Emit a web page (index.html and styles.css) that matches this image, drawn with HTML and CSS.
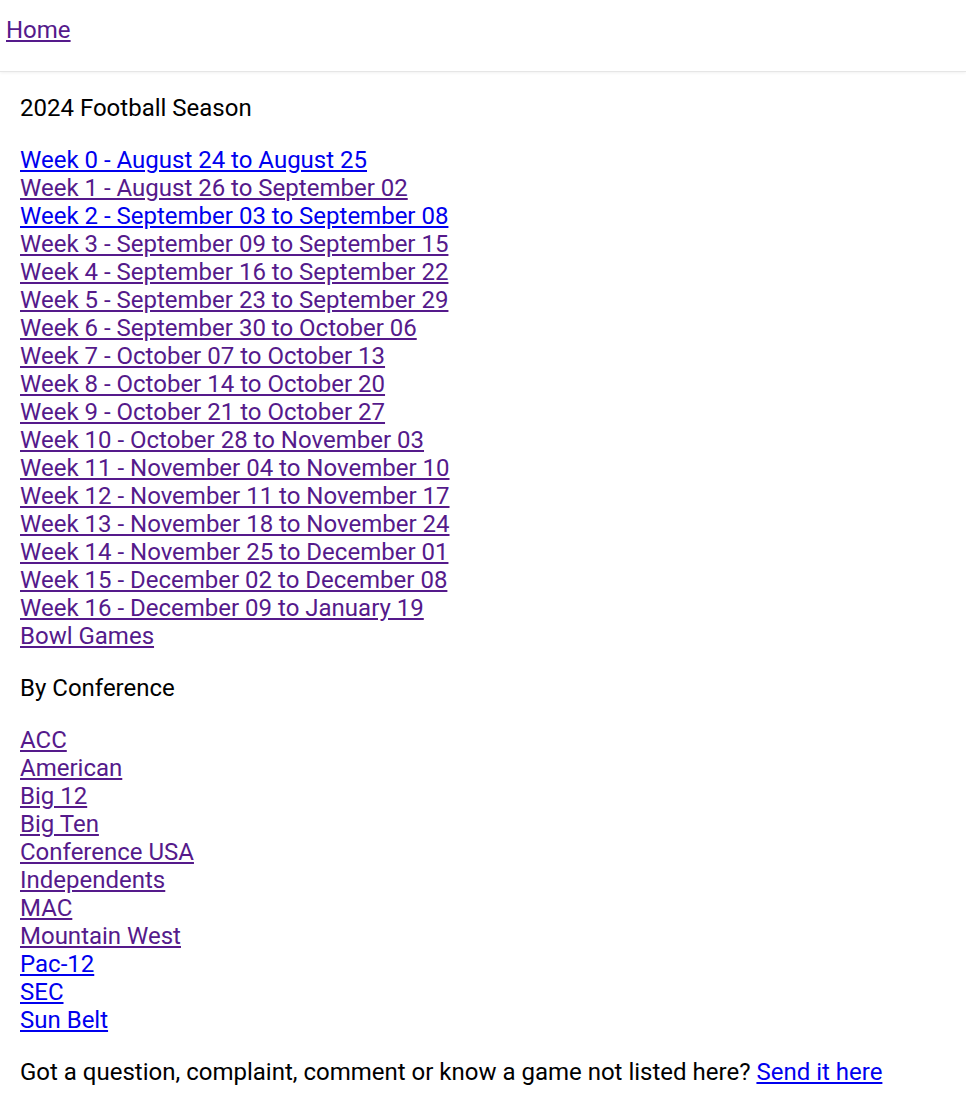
FILE: index.html
```html
<!DOCTYPE html>
<html lang="en">
<head>
<meta charset="utf-8">
<title>2024 Football Season</title>
<link rel="stylesheet" href="styles.css">
</head>
<body>
<header class="topbar">
  <a class="v" href="#home">Home</a>
</header>
<main class="content">
  <p class="heading first">2024 Football Season</p>
  <ul class="links">
    <li><a class="u" href="#w0">Week 0 - August 24 to August 25</a></li>
    <li><a class="v" href="#w1">Week 1 - August 26 to September 02</a></li>
    <li><a class="u" href="#w2">Week 2 - September 03 to September 08</a></li>
    <li><a class="v" href="#w3">Week 3 - September 09 to September 15</a></li>
    <li><a class="v" href="#w4">Week 4 - September 16 to September 22</a></li>
    <li><a class="v" href="#w5">Week 5 - September 23 to September 29</a></li>
    <li><a class="v" href="#w6">Week 6 - September 30 to October 06</a></li>
    <li><a class="v" href="#w7">Week 7 - October 07 to October 13</a></li>
    <li><a class="v" href="#w8">Week 8 - October 14 to October 20</a></li>
    <li><a class="v" href="#w9">Week 9 - October 21 to October 27</a></li>
    <li><a class="v" href="#w10">Week 10 - October 28 to November 03</a></li>
    <li><a class="v" href="#w11">Week 11 - November 04 to November 10</a></li>
    <li><a class="v" href="#w12">Week 12 - November 11 to November 17</a></li>
    <li><a class="v" href="#w13">Week 13 - November 18 to November 24</a></li>
    <li><a class="v" href="#w14">Week 14 - November 25 to December 01</a></li>
    <li><a class="v" href="#w15">Week 15 - December 02 to December 08</a></li>
    <li><a class="v" href="#w16">Week 16 - December 09 to January 19</a></li>
    <li><a class="v" href="#bowl">Bowl Games</a></li>
  </ul>
  <p class="heading">By Conference</p>
  <ul class="links">
    <li><a class="v" href="#acc">ACC</a></li>
    <li><a class="v" href="#american">American</a></li>
    <li><a class="v" href="#big12">Big 12</a></li>
    <li><a class="v" href="#bigten">Big Ten</a></li>
    <li><a class="v" href="#cusa">Conference USA</a></li>
    <li><a class="v" href="#ind">Independents</a></li>
    <li><a class="v" href="#mac">MAC</a></li>
    <li><a class="v" href="#mw">Mountain West</a></li>
    <li><a class="u" href="#pac12">Pac-12</a></li>
    <li><a class="u" href="#sec">SEC</a></li>
    <li><a class="u" href="#sunbelt">Sun Belt</a></li>
  </ul>
  <p class="heading">Got a question, complaint, comment or know a game not listed here? <a class="u" href="#contact">Send it here</a></p>
</main>
</body>
</html>
```
FILE: styles.css
```css
html, body {
  margin: 0;
  padding: 0;
  background: #ffffff;
}
body {
  font-family: Roboto, "Liberation Sans", Arial, sans-serif;
  font-size: 24px;
  line-height: 28px;
  color: #000000;
}
.topbar {
  height: 72px;
  box-sizing: border-box;
  padding: 16px 6px 0;
  border-bottom: 1px solid #e6e6e6;
  box-shadow: 0 1px 3px rgba(0, 0, 0, 0.06);
}
.content {
  padding: 0 20px;
}
.heading {
  margin: 24px 0;
}
.heading.first {
  margin-top: 22px;
}
.links {
  list-style: none;
  margin: 0;
  padding: 0;
}
a {
  text-decoration: underline;
}
a.u {
  color: #0000ee;
}
a.v {
  color: #551a8b;
}
```
